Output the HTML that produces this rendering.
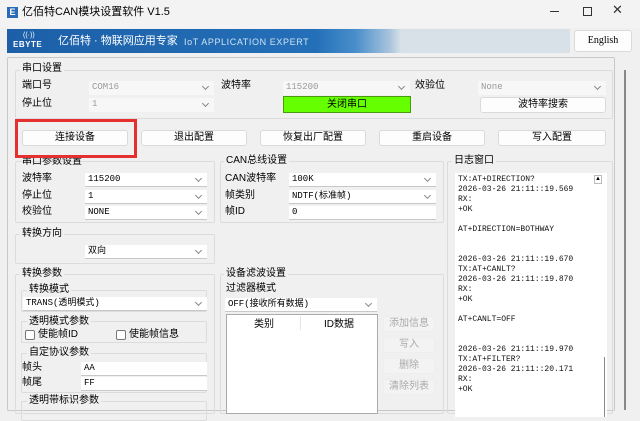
<!DOCTYPE html>
<html><head><meta charset="utf-8"><style>
*{box-sizing:border-box;margin:0;padding:0}
body{width:640px;height:417px;overflow:hidden;background:#f0f0f0;font-family:"Liberation Sans","Noto Sans CJK SC",sans-serif;font-size:10px;color:#000;position:relative}
.a{position:absolute}
.g{position:absolute;border:1px solid #dcdcdc;border-radius:2px}
.gt{position:absolute;font-size:10px;background:#f0f0f0;padding:0 2px;line-height:12px}
.lbl{position:absolute;font-size:10px;line-height:12px}
.cb{position:absolute;background:#fff;border-bottom:1px solid #c8c8c8;font-family:"Liberation Mono","Noto Sans CJK SC",monospace;font-size:9px;line-height:13px;padding-left:3px;height:14px}
.cb.d{background:#f7f7f7;color:#999;border-bottom:none}
.cb:after{content:"";position:absolute;right:6px;top:3px;width:4px;height:4px;border-right:1px solid #888;border-bottom:1px solid #888;transform:rotate(45deg)}
.cb.n:after{display:none}
.bt{position:absolute;background:#fdfdfd;border:1px solid #dadada;border-radius:3px;text-align:center;font-size:10px;line-height:14px;height:16px}
.bt.d{color:#aaa;background:#f3f3f3;border-color:#eee}
.chk{position:absolute;width:10px;height:10px;border:1px solid #777;border-radius:2px;background:#fff}
</style></head><body>
<div class="a" style="left:0;top:0;width:640px;height:28px;background:#f3f3f3"></div>
<div class="a" style="left:7px;top:7px;width:11px;height:11px;background:#2a6bb5;color:#fff;font-size:9px;line-height:11px;text-align:center;font-weight:bold">E</div>
<div class="lbl" style="left:22px;top:6px;font-size:11px">亿佰特CAN模块设置软件 V1.5</div>
<div class="a" style="left:550px;top:11px;width:9px;height:1px;background:#333"></div>
<div class="a" style="left:583px;top:7px;width:9px;height:9px;border:1px solid #333"></div>
<div class="a" style="left:612px;top:2px;font-size:13px;line-height:16px;color:#333">✕</div>
<div class="a" style="left:7px;top:29px;width:563px;height:24px;background:linear-gradient(90deg,#1c5fa8 0,#2470b8 55%,#4a8fcc 62%,#a9c4dc 68%,#d8e1e8 70%,#d8e1e8 100%)"></div>
<div class="lbl" style="left:23px;top:30px;color:#fff;font-size:7px">((·))</div>
<div class="lbl" style="left:13px;top:39px;color:#fff;font-size:8px;font-weight:bold;letter-spacing:0.5px">EBYTE</div>
<div class="lbl" style="left:58px;top:35px;color:#fff;font-size:11px">亿佰特 · 物联网应用专家</div>
<div class="lbl" style="left:184px;top:36px;color:#cfe2f5;font-size:9px;letter-spacing:0.6px">IoT APPLICATION EXPERT</div>
<div class="bt" style="left:574px;top:30px;width:58px;height:22px;line-height:20px;font-family:'Liberation Serif',serif;font-size:10px">English</div>
<div class="a" style="left:7px;top:57px;width:608px;height:354px;border:1px solid #c8c8c8;border-radius:2px"></div>
<div class="a" style="left:624px;top:70px;width:2px;height:340px;background:#888"></div>
<div class="g" style="left:15px;top:70px;width:598px;height:49px"></div>
<div class="gt" style="left:20px;top:63px">串口设置</div>
<div class="lbl" style="left:22px;top:80px">端口号</div>
<div class="cb d" style="left:89px;top:81px;width:125px">COM16</div>
<div class="lbl" style="left:221px;top:80px">波特率</div>
<div class="cb d" style="left:283px;top:81px;width:127px">115200</div>
<div class="lbl" style="left:415px;top:80px">效验位</div>
<div class="cb d" style="left:478px;top:81px;width:128px">None</div>
<div class="lbl" style="left:22px;top:98px">停止位</div>
<div class="cb d" style="left:89px;top:98px;width:125px">1</div>
<div class="a" style="left:283px;top:96px;width:128px;height:17px;background:#66ff00;border:1px solid #4a9a10;text-align:center;line-height:15px">关闭串口</div>
<div class="bt" style="left:480px;top:97px;width:126px">波特率搜索</div>
<div class="bt" style="left:22px;top:130px;width:106px">连接设备</div>
<div class="bt" style="left:141px;top:130px;width:106px">退出配置</div>
<div class="bt" style="left:260px;top:130px;width:106px">恢复出厂配置</div>
<div class="bt" style="left:379px;top:130px;width:106px">重启设备</div>
<div class="bt" style="left:498px;top:130px;width:108px">写入配置</div>
<div class="g" style="left:15px;top:161px;width:200px;height:62px"></div>
<div class="gt" style="left:20px;top:156px;background:transparent">串口参数设置</div>
<div class="a" style="left:15px;top:119px;width:122px;height:39px;border:3px solid #e53030"></div>
<div class="lbl" style="left:22px;top:173px">波特率</div><div class="cb" style="left:85px;top:173px;width:122px">115200</div>
<div class="lbl" style="left:22px;top:190px">停止位</div><div class="cb" style="left:85px;top:190px;width:122px">1</div>
<div class="lbl" style="left:22px;top:206px">校验位</div><div class="cb" style="left:85px;top:206px;width:122px">NONE</div>
<div class="g" style="left:220px;top:161px;width:224px;height:62px"></div>
<div class="gt" style="left:224px;top:155px">CAN总线设置</div>
<div class="lbl" style="left:225px;top:173px">CAN波特率</div><div class="cb" style="left:289px;top:173px;width:147px">100K</div>
<div class="lbl" style="left:225px;top:190px">帧类别</div><div class="cb" style="left:289px;top:190px;width:147px">NDTF(标准帧)</div>
<div class="lbl" style="left:225px;top:206px">帧ID</div><div class="cb n" style="left:289px;top:206px;width:147px">0</div>
<div class="g" style="left:15px;top:234px;width:200px;height:30px"></div>
<div class="gt" style="left:20px;top:228px">转换方向</div>
<div class="cb" style="left:85px;top:245px;width:122px">双向</div>
<div class="g" style="left:15px;top:274px;width:200px;height:140px"></div>
<div class="gt" style="left:20px;top:268px">转换参数</div>
<div class="g" style="left:21px;top:290px;width:186px;height:22px"></div>
<div class="gt" style="left:27px;top:284px">转换模式</div>
<div class="cb" style="left:23px;top:297px;width:184px">TRANS(透明模式)</div>
<div class="g" style="left:21px;top:321px;width:186px;height:22px"></div>
<div class="gt" style="left:27px;top:316px">透明模式参数</div>
<div class="chk" style="left:25px;top:330px"></div><div class="lbl" style="left:38px;top:329px">使能帧ID</div>
<div class="chk" style="left:116px;top:330px"></div><div class="lbl" style="left:129px;top:329px">使能帧信息</div>
<div class="g" style="left:21px;top:353px;width:186px;height:40px"></div>
<div class="gt" style="left:27px;top:347px">自定协议参数</div>
<div class="lbl" style="left:22px;top:362px">帧头</div><div class="cb n" style="left:81px;top:362px;width:126px">AA</div>
<div class="lbl" style="left:22px;top:377px">帧尾</div><div class="cb n" style="left:81px;top:377px;width:126px">FF</div>
<div class="g" style="left:21px;top:401px;width:186px;height:20px"></div>
<div class="gt" style="left:27px;top:395px">透明带标识参数</div>
<div class="g" style="left:220px;top:274px;width:224px;height:140px"></div>
<div class="gt" style="left:224px;top:268px">设备滤波设置</div>
<div class="lbl" style="left:226px;top:283px">过滤器模式</div>
<div class="cb" style="left:225px;top:298px;width:152px">OFF(接收所有数据)</div>
<div class="a" style="left:226px;top:314px;width:152px;height:100px;background:#fff;border:1px solid #aaa"></div>
<div class="lbl" style="left:254px;top:319px">类别</div>
<div class="a" style="left:300px;top:316px;width:1px;height:14px;background:#e5e5e5"></div>
<div class="lbl" style="left:324px;top:319px">ID数据</div>
<div class="bt d" style="left:383px;top:316px;width:52px">添加信息</div>
<div class="bt d" style="left:383px;top:337px;width:52px">写入</div>
<div class="bt d" style="left:383px;top:358px;width:52px">删除</div>
<div class="bt d" style="left:383px;top:379px;width:52px">清除列表</div>
<div class="g" style="left:447px;top:161px;width:166px;height:253px"></div>
<div class="gt" style="left:452px;top:155px">日志窗口</div>
<div class="a" style="left:455px;top:173px;width:152px;height:244px;background:#fff"></div>
<div class="a" style="left:594px;top:175px;width:8px;height:9px;border:1px solid #bbb;font-size:6px;line-height:7px;text-align:center">▲</div>
<div class="a" style="left:604px;top:357px;width:1px;height:60px;background:#888"></div>
<pre class="a" style="left:458px;top:175px;font-family:'Liberation Mono',monospace;font-size:8px;line-height:10px;color:#111">TX:AT+DIRECTION?
2026-03-26 21:11::19.569
RX:
+OK

AT+DIRECTION=BOTHWAY


2026-03-26 21:11::19.670
TX:AT+CANLT?
2026-03-26 21:11::19.870
RX:
+OK

AT+CANLT=OFF


2026-03-26 21:11::19.970
TX:AT+FILTER?
2026-03-26 21:11::20.171
RX:
+OK</pre>
</body></html>
